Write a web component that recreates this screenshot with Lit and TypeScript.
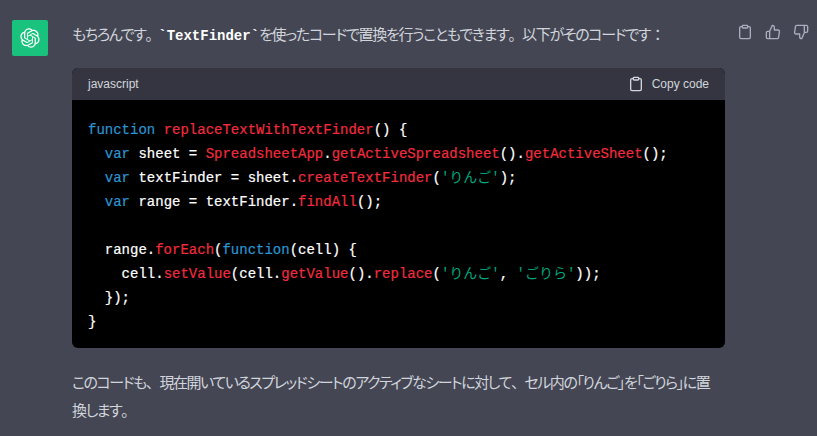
import { LitElement, html, css, svg } from "lit";
import { customElement } from "lit/decorators.js";

const clip = svg`<path d="M16 4h2a2 2 0 0 1 2 2v14a2 2 0 0 1-2 2H6a2 2 0 0 1-2-2V6a2 2 0 0 1 2-2h2"></path><rect x="8" y="2" width="8" height="4" rx="1" ry="1"></rect>`;
const up = svg`<path d="M14 9V5a3 3 0 0 0-3-3l-4 9v11h11.28a2 2 0 0 0 2-1.7l1.38-9a2 2 0 0 0-2-2.3zM7 22H4a2 2 0 0 1-2-2v-7a2 2 0 0 1 2-2h3"></path>`;
const down = svg`<path d="M10 15v4a3 3 0 0 0 3 3l4-9V2H5.72a2 2 0 0 0-2 1.7l-1.38 9a2 2 0 0 0 2 2.3zm7-13h3a2 2 0 0 1 2 1.67v7a2 2 0 0 1-2 2h-3"></path>`;
const icon = (c: unknown) =>
  html`<svg class="ic" viewBox="0 0 24 24" fill="none" stroke="currentColor" stroke-width="2" stroke-linecap="round" stroke-linejoin="round">${c}</svg>`;
const logo = "M37.5324 16.8707C37.9808 15.5241 38.1363 14.0974 37.9886 12.6859C37.8409 11.2744 37.3934 9.91076 36.676 8.68622C35.6126 6.83404 33.9882 5.3676 32.0373 4.4985C30.0864 3.62941 27.9098 3.40259 25.8215 3.85078C24.8796 2.7893 23.7219 1.94125 22.4257 1.36341C21.1295 0.785575 19.7249 0.491269 18.3058 0.500197C16.1708 0.495044 14.0893 1.16803 12.3614 2.42214C10.6335 3.67624 9.34853 5.44666 8.6917 7.47815C7.30085 7.76286 5.98686 8.3414 4.8377 9.17505C3.68854 10.0087 2.73073 11.0782 2.02839 12.312C0.956464 14.1591 0.498905 16.2988 0.721698 18.4228C0.944492 20.5467 1.83612 22.5449 3.268 24.1293C2.81966 25.4759 2.66413 26.9026 2.81182 28.3141C2.95951 29.7256 3.40701 31.0892 4.12437 32.3138C5.18791 34.1659 6.8123 35.6322 8.76321 36.5013C10.7141 37.3704 12.8907 37.5973 14.9789 37.1492C15.9208 38.2107 17.0786 39.0587 18.3747 39.6366C19.6709 40.2144 21.0755 40.5087 22.4946 40.4998C24.6307 40.5054 26.7133 39.8321 28.4418 38.5772C30.1704 37.3223 31.4556 35.5506 32.1119 33.5179C33.5027 33.2332 34.8167 32.6547 35.9659 31.821C37.115 30.9874 38.0728 29.9178 38.7752 28.684C39.8458 26.8371 40.3023 24.6979 40.0789 22.5748C39.8556 20.4517 38.9639 18.4544 37.5324 16.8707ZM22.4978 37.8849C20.7443 37.8874 19.0459 37.2733 17.6994 36.1501C17.7601 36.117 17.8666 36.0586 17.936 36.0161L25.9004 31.4156C26.1003 31.3019 26.2663 31.137 26.3813 30.9378C26.4964 30.7386 26.5563 30.5124 26.5549 30.2825V19.0542L29.9213 20.998C29.9389 21.0068 29.9541 21.0198 29.9656 21.0359C29.977 21.052 29.9842 21.0707 29.9867 21.0902V30.3889C29.9842 32.375 29.1946 34.2791 27.7909 35.6841C26.3872 37.0892 24.4838 37.8806 22.4978 37.8849ZM6.39227 31.0064C5.51397 29.4888 5.19742 27.7107 5.49804 25.9832C5.55718 26.0187 5.66048 26.0818 5.73461 26.1244L13.699 30.7248C13.8975 30.8408 14.1233 30.902 14.3532 30.902C14.583 30.902 14.8088 30.8408 15.0073 30.7248L24.731 25.1103V28.9979C24.7321 29.0177 24.7283 29.0376 24.7199 29.0556C24.7115 29.0736 24.6988 29.0893 24.6829 29.1012L16.6317 33.7497C14.9096 34.7416 12.8643 35.0097 10.9447 34.4954C9.02506 33.9811 7.38785 32.7263 6.39227 31.0064ZM4.29707 13.6194C5.17156 12.0998 6.55279 10.9364 8.19885 10.3327C8.19885 10.4013 8.19491 10.5228 8.19491 10.6071V19.808C8.19351 20.0378 8.25334 20.2638 8.36823 20.4629C8.48312 20.6619 8.64893 20.8267 8.84863 20.9404L18.5723 26.5542L15.206 28.4979C15.1894 28.5089 15.1703 28.5155 15.1505 28.5173C15.1307 28.5191 15.1107 28.516 15.0924 28.5082L7.04046 23.8557C5.32135 22.8601 4.06716 21.2235 3.55289 19.3046C3.03862 17.3858 3.30624 15.3413 4.29707 13.6194ZM31.955 20.0556L22.2312 14.4411L25.5976 12.4981C25.6142 12.4872 25.6333 12.4805 25.6531 12.4787C25.6729 12.4769 25.6928 12.4801 25.7111 12.4879L33.7631 17.1364C34.9967 17.849 36.0017 18.8982 36.6606 20.1613C37.3194 21.4244 37.6047 22.849 37.4832 24.2684C37.3617 25.6878 36.8382 27.0432 35.9743 28.1759C35.1103 29.3086 33.9415 30.1717 32.6047 30.6641C32.6047 30.5947 32.6047 30.4733 32.6047 30.3889V21.188C32.6066 20.9586 32.5474 20.7328 32.4332 20.5338C32.319 20.3348 32.154 20.1698 31.955 20.0556ZM35.3055 15.0128C35.2464 14.9765 35.1431 14.9142 35.069 14.8717L27.1045 10.2712C26.906 10.1554 26.6803 10.0943 26.4504 10.0943C26.2206 10.0943 25.9948 10.1554 25.7963 10.2712L16.0726 15.8858V11.9982C16.0715 11.9783 16.0753 11.9585 16.0837 11.9405C16.0921 11.9225 16.1048 11.9068 16.1207 11.8949L24.1719 7.25025C25.4053 6.53903 26.8121 6.19376 28.2299 6.25482C29.6477 6.31589 31.0181 6.78077 32.1806 7.59508C33.3431 8.40939 34.2497 9.53945 34.7947 10.8531C35.3397 12.1667 35.5006 13.6095 35.2583 15.0128H35.3055ZM14.2417 21.9348L10.8745 19.9911C10.8569 19.9823 10.8417 19.9693 10.8303 19.9532C10.8188 19.9371 10.8116 19.9184 10.8091 19.8989V10.6001C10.8107 9.17553 11.2166 7.78079 11.9793 6.57881C12.7421 5.37684 13.8303 4.41716 15.1166 3.81207C16.403 3.20699 17.8345 2.98153 19.2436 3.16206C20.6528 3.34259 21.9813 3.92166 23.0736 4.8321C23.0129 4.86425 22.9072 4.92332 22.8371 4.96565L14.8727 9.56616C14.6728 9.67975 14.5067 9.84461 14.3917 10.0438C14.2767 10.243 14.2167 10.4691 14.2183 10.6991L14.2417 21.9348ZM16.071 17.9911L20.4018 15.4899L24.7325 17.9896V22.9903L20.4018 25.4899L16.071 22.9903V17.9911Z";
const w = (c: string) => html`<span class="w">${c}</span>`;

@customElement("app-root")
export class AppRoot extends LitElement {
  static styles = css`
    :host { display: block; height: 436px; overflow: hidden; background: #444654; color: #d1d5db;
      font-family: "Noto Sans CJK JP", "Noto Sans", sans-serif; font-size: 15px; line-height: 28px; }
    .row { display: flex; align-items: flex-start; gap: 12px; padding: 20px 0 0 12px; }
    .avatar { width: 36px; height: 36px; flex: none; margin-right: 12px; border-radius: 2px; background: #19c37d;
      display: flex; align-items: center; justify-content: center; color: #fff; }
    .avatar svg { width: 20px; height: 20px; }
    .content { width: 653px; flex: none; }
    p { margin: 0; font-feature-settings: "palt"; white-space: nowrap; }
    .w { font-feature-settings: normal; }
    .first { letter-spacing: -1.3px; }
    .last { letter-spacing: -1.45px; }
    .inline { font-family: "Liberation Mono", monospace; font-size: 14px; font-weight: 700; color: #fff;
      font-feature-settings: normal; letter-spacing: 0; line-height: 0; margin-left: -1px; }
    .block { margin: 20px 0; border-radius: 6px; background: #000; overflow: hidden; }
    .head { height: 32px; padding: 0 16px; background: #343541; display: flex; align-items: center; justify-content: space-between;
      font-family: "Liberation Sans", sans-serif; font-size: 12px; line-height: 16px; }
    .copy { display: flex; align-items: center; gap: 8px; }
    .ic { width: 16px; height: 16px; display: block; flex: none; }
    pre { margin: 0; padding: 18px 16px 14px 16px; font-family: "Liberation Mono", "Noto Sans CJK JP", monospace; font-size: 14px;
      line-height: 24px; color: #fff; -webkit-text-stroke: 0.2px currentColor; }
    .k { color: #2e95d3; }
    .t { color: #f22c3d; }
    .s { color: #00a67d; -webkit-text-stroke: 0; }
    .actions { display: flex; gap: 12px; margin-top: 4px; color: #acacbe; }
  `;
  render() {
    return html`<div class="row">
      <div class="avatar"><svg viewBox="0 0 41 41" fill="currentColor"><path d=${logo}></path></svg></div>
      <div class="content">
        <p class="first">もちろんです${w("。")}<span class="inline">\`TextFinder\`</span>を使ったコードで置換を行うこともできます${w("。")}以下がそのコードです${w("：")}</p>
        <div class="block">
          <div class="head"><span>javascript</span><span class="copy">${icon(clip)}Copy code</span></div>
          <pre><span class="k">function</span> <span class="t">replaceTextWithTextFinder</span>() {
  <span class="k">var</span> sheet = <span class="t">SpreadsheetApp</span>.<span class="t">getActiveSpreadsheet</span>().<span class="t">getActiveSheet</span>();
  <span class="k">var</span> textFinder = sheet.<span class="t">createTextFinder</span>(<span class="s">'りんご'</span>);
  <span class="k">var</span> range = textFinder.<span class="t">findAll</span>();

  range.<span class="t">forEach</span>(<span class="k">function</span>(cell) {
    cell.<span class="t">setValue</span>(cell.<span class="t">getValue</span>().<span class="t">replace</span>(<span class="s">'りんご'</span>, <span class="s">'ごりら'</span>));
  });
}</pre>
        </div>
        <p class="last">このコードも${w("、")}現在開いているスプレッドシートのアクティブなシートに対して${w("、")}セル内の「りんご」を「ごりら」に置<br>換します${w("。")}</p>
      </div>
      <div class="actions">${icon(clip)}${icon(up)}${icon(down)}</div>
    </div>`;
  }
}
